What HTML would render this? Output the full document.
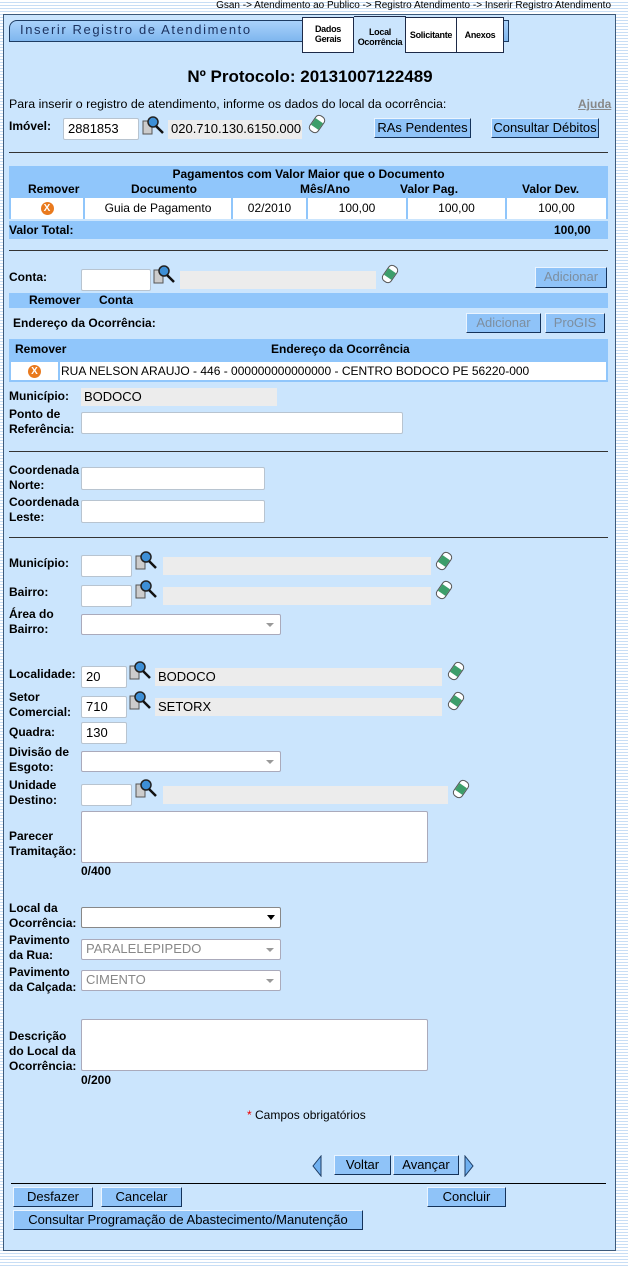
<!DOCTYPE html>
<html><head><meta charset="utf-8"><style>
*{box-sizing:border-box;margin:0;padding:0}
body{width:628px;height:1267px;position:relative;overflow:hidden;font-family:"Liberation Sans",sans-serif;font-size:12px;color:#000;
background:#fff repeating-linear-gradient(#fff 0 2px,#c8def5 2px 3px)}
.a{position:absolute}
#panel{position:absolute;left:3px;top:14px;width:613px;height:1237px;background:#cbe5fd;border:1px solid #3d5a7a}
.l{position:absolute;font-weight:bold;font-size:12px;line-height:15px;white-space:nowrap}
.in{position:absolute;background:#fff;border:1px solid #b8c4d0;border-radius:2px;font-size:13px;padding:3px 0 0 4px;line-height:14px}
.g{position:absolute;background:#ececec;font-size:13px;padding:2px 3px;line-height:14px}
.sel{position:absolute;background:#fff;border:1px solid #aab;border-radius:2px;font-size:13px;color:#888;padding:2px 4px;line-height:14px}
.sel:after{content:"";position:absolute;right:6px;top:8px;border:4px solid transparent;border-top:4px solid #999}
.btn{position:absolute;background:#8fc3f8;border:1px solid;border-color:#eaf4ff #15335a #15335a #eaf4ff;text-align:center;font-size:13px;line-height:17px}
.dis{color:#7d8e9f}
.hr{position:absolute;left:9px;width:599px;height:1px;background:#333}
.bar{position:absolute;background:#90c6fb;font-weight:bold;font-size:12px}
.cell{position:absolute;background:#fff;text-align:center;font-size:12px;line-height:20px}
.x{display:inline-block;width:13px;height:13px;border-radius:50%;background:#e97a1e;color:#fff;font-size:10px;font-weight:bold;line-height:13px;text-align:center;vertical-align:middle}
.ta{position:absolute;background:#fff;border:1px solid #aab;border-radius:2px}
.tab{position:absolute;font-weight:bold;font-size:9px;line-height:10px;text-align:center;letter-spacing:-0.3px}
</style></head><body>
<div class="a" style="right:17px;top:0;font-size:10px;line-height:11px">Gsan -&gt; Atendimento ao Publico -&gt; Registro Atendimento -&gt; Inserir Registro Atendimento</div>
<div id="panel"></div>
<div class="a" style="left:9px;top:20px;width:500px;height:22px;background:linear-gradient(#a9d2fb,#7fb6ee);border:1px solid #1d3c63;border-radius:8px 0 0 0"></div>
<div class="a" style="left:20px;top:22px;font-size:13px;letter-spacing:1.6px;color:#1d3360">Inserir Registro de Atendimento</div>
<div class="tab" style="left:302px;top:17px;width:52px;height:36px;background:#fff;border:1px solid #1d2a48;padding-top:6px">Dados<br>Gerais</div>
<div class="tab" style="left:354px;top:16px;width:52px;height:38px;background:#cbe5fd;padding-top:10px;border-top:1px solid #1d2a48">Local<br>Ocorrência</div>
<div class="tab" style="left:405px;top:17px;width:52px;height:36px;background:#fff;border:1px solid #1d2a48;line-height:34px">Solicitante</div>
<div class="tab" style="left:456px;top:17px;width:48px;height:36px;background:#fff;border:1px solid #1d2a48;line-height:34px">Anexos</div>

<div class="a" style="left:0;width:620px;top:67px;text-align:center;font-weight:bold;font-size:17px">Nº Protocolo: 20131007122489</div>
<div class="a" style="left:9px;top:97px;font-size:12.4px">Para inserir o registro de atendimento, informe os dados do local da ocorrência:</div>
<div class="a" style="left:578px;top:97px;font-size:12px;font-weight:bold;color:#888;text-decoration:underline">Ajuda</div>

<div class="l" style="left:9px;top:119px">Imóvel:</div>
<div class="in" style="left:63px;top:118px;width:76px;height:22px">2881853</div>
<svg class="a" style="left:142px;top:115px" width="24" height="22"><rect x="1" y="6" width="9" height="13" fill="#ccc" stroke="#555"/><circle cx="11" cy="7" r="5" fill="#3d8fd6" stroke="#222" stroke-width="1.5"/><line x1="14" y1="11" x2="21" y2="18" stroke="#111" stroke-width="2.5"/></svg>
<div class="g" style="left:168px;top:120px;width:134px;height:19px">020.710.130.6150.000</div>
<svg class="a" style="left:307px;top:114px" width="20" height="20"><g transform="rotate(35 10 10)"><rect x="5" y="1" width="10" height="18" rx="4" fill="#fff" stroke="#555"/><rect x="5.5" y="6" width="9" height="8" fill="#3d9e6a"/></g></svg>
<div class="btn" style="left:374px;top:118px;width:97px;height:20px">RAs Pendentes</div>
<div class="btn" style="left:491px;top:118px;width:108px;height:20px">Consultar Débitos</div>

<div class="hr" style="top:152px"></div>
<div class="bar" style="left:9px;top:166px;width:599px;height:73px"></div>
<div class="a" style="left:9px;top:167px;width:599px;text-align:center;font-weight:bold">Pagamentos com Valor Maior que o Documento</div>
<div class="l" style="left:28px;top:182px">Remover</div>
<div class="l" style="left:131px;top:182px">Documento</div>
<div class="l" style="left:300px;top:182px">Mês/Ano</div>
<div class="l" style="left:400px;top:182px">Valor Pag.</div>
<div class="l" style="left:522px;top:182px">Valor Dev.</div>
<div class="cell" style="left:11px;top:198px;width:72px;height:21px"><span class="x">X</span></div>
<div class="cell" style="left:85px;top:198px;width:146px;height:21px">Guia de Pagamento</div>
<div class="cell" style="left:233px;top:198px;width:73px;height:21px">02/2010</div>
<div class="cell" style="left:308px;top:198px;width:98px;height:21px">100,00</div>
<div class="cell" style="left:408px;top:198px;width:97px;height:21px">100,00</div>
<div class="cell" style="left:507px;top:198px;width:99px;height:21px">100,00</div>
<div class="a" style="left:8px;top:219px;width:600px;height:2px;background:#cbe5fd"></div>
<div class="l" style="left:9px;top:223px">Valor Total:</div>
<div class="l" style="left:554px;top:223px">100,00</div>

<div class="hr" style="top:250px"></div>
<div class="l" style="left:9px;top:270px">Conta:</div>
<div class="in" style="left:81px;top:269px;width:70px;height:22px"></div>
<svg class="a" style="left:153px;top:264px" width="24" height="22"><rect x="1" y="6" width="9" height="13" fill="#ccc" stroke="#555"/><circle cx="11" cy="7" r="5" fill="#3d8fd6" stroke="#222" stroke-width="1.5"/><line x1="14" y1="11" x2="21" y2="18" stroke="#111" stroke-width="2.5"/></svg>
<div class="g" style="left:180px;top:271px;width:196px;height:18px"></div>
<svg class="a" style="left:380px;top:264px" width="20" height="20"><g transform="rotate(35 10 10)"><rect x="5" y="1" width="10" height="18" rx="4" fill="#fff" stroke="#555"/><rect x="5.5" y="6" width="9" height="8" fill="#3d9e6a"/></g></svg>
<div class="btn dis" style="left:535px;top:267px;width:72px;height:21px">Adicionar</div>
<div class="bar" style="left:9px;top:293px;width:599px;height:15px"></div>
<div class="l" style="left:29px;top:293px">Remover</div>
<div class="l" style="left:99px;top:293px">Conta</div>
<div class="l" style="left:13px;top:316px">Endereço da Ocorrência:</div>
<div class="btn dis" style="left:466px;top:313px;width:75px;height:20px">Adicionar</div>
<div class="btn dis" style="left:545px;top:313px;width:60px;height:20px">ProGIS</div>
<div class="bar" style="left:9px;top:339px;width:599px;height:43px"></div>
<div class="l" style="left:15px;top:342px">Remover</div>
<div class="l" style="left:271px;top:342px">Endereço da Ocorrência</div>
<div class="cell" style="left:11px;top:362px;width:47px;height:18px;line-height:18px"><span class="x">X</span></div>
<div class="cell" style="left:60px;top:362px;width:546px;height:18px;line-height:18px;text-align:left;padding-left:1px">RUA NELSON ARAUJO - 446 - 000000000000000 - CENTRO BODOCO PE 56220-000</div>

<div class="l" style="left:9px;top:389px">Município:</div>
<div class="g" style="left:81px;top:388px;width:196px;height:18px">BODOCO</div>
<div class="l" style="left:9px;top:407px">Ponto de<br>Referência:</div>
<div class="in" style="left:81px;top:412px;width:322px;height:22px"></div>

<div class="hr" style="top:451px"></div>
<div class="l" style="left:9px;top:463px">Coordenada<br>Norte:</div>
<div class="in" style="left:81px;top:467px;width:184px;height:23px"></div>
<div class="l" style="left:9px;top:495px">Coordenada<br>Leste:</div>
<div class="in" style="left:81px;top:500px;width:184px;height:23px"></div>

<div class="hr" style="top:537px"></div>
<div class="l" style="left:9px;top:556px">Município:</div>
<div class="in" style="left:81px;top:555px;width:51px;height:22px"></div>
<svg class="a" style="left:135px;top:550px" width="24" height="22"><rect x="1" y="6" width="9" height="13" fill="#ccc" stroke="#555"/><circle cx="11" cy="7" r="5" fill="#3d8fd6" stroke="#222" stroke-width="1.5"/><line x1="14" y1="11" x2="21" y2="18" stroke="#111" stroke-width="2.5"/></svg>
<div class="g" style="left:163px;top:557px;width:268px;height:18px"></div>
<svg class="a" style="left:434px;top:551px" width="20" height="20"><g transform="rotate(35 10 10)"><rect x="5" y="1" width="10" height="18" rx="4" fill="#fff" stroke="#555"/><rect x="5.5" y="6" width="9" height="8" fill="#3d9e6a"/></g></svg>
<div class="l" style="left:9px;top:585px">Bairro:</div>
<div class="in" style="left:81px;top:585px;width:51px;height:22px"></div>
<svg class="a" style="left:135px;top:579px" width="24" height="22"><rect x="1" y="6" width="9" height="13" fill="#ccc" stroke="#555"/><circle cx="11" cy="7" r="5" fill="#3d8fd6" stroke="#222" stroke-width="1.5"/><line x1="14" y1="11" x2="21" y2="18" stroke="#111" stroke-width="2.5"/></svg>
<div class="g" style="left:163px;top:587px;width:268px;height:18px"></div>
<svg class="a" style="left:434px;top:580px" width="20" height="20"><g transform="rotate(35 10 10)"><rect x="5" y="1" width="10" height="18" rx="4" fill="#fff" stroke="#555"/><rect x="5.5" y="6" width="9" height="8" fill="#3d9e6a"/></g></svg>
<div class="l" style="left:9px;top:607px">Área do<br>Bairro:</div>
<div class="sel" style="left:81px;top:614px;width:200px;height:21px"></div>

<div class="l" style="left:9px;top:667px">Localidade:</div>
<div class="in" style="left:81px;top:666px;width:46px;height:22px">20</div>
<svg class="a" style="left:129px;top:660px" width="24" height="22"><rect x="1" y="6" width="9" height="13" fill="#ccc" stroke="#555"/><circle cx="11" cy="7" r="5" fill="#3d8fd6" stroke="#222" stroke-width="1.5"/><line x1="14" y1="11" x2="21" y2="18" stroke="#111" stroke-width="2.5"/></svg>
<div class="g" style="left:155px;top:668px;width:287px;height:18px">BODOCO</div>
<svg class="a" style="left:446px;top:661px" width="20" height="20"><g transform="rotate(35 10 10)"><rect x="5" y="1" width="10" height="18" rx="4" fill="#fff" stroke="#555"/><rect x="5.5" y="6" width="9" height="8" fill="#3d9e6a"/></g></svg>
<div class="l" style="left:9px;top:690px">Setor<br>Comercial:</div>
<div class="in" style="left:81px;top:696px;width:46px;height:22px">710</div>
<svg class="a" style="left:129px;top:690px" width="24" height="22"><rect x="1" y="6" width="9" height="13" fill="#ccc" stroke="#555"/><circle cx="11" cy="7" r="5" fill="#3d8fd6" stroke="#222" stroke-width="1.5"/><line x1="14" y1="11" x2="21" y2="18" stroke="#111" stroke-width="2.5"/></svg>
<div class="g" style="left:155px;top:698px;width:287px;height:18px">SETORX</div>
<svg class="a" style="left:446px;top:691px" width="20" height="20"><g transform="rotate(35 10 10)"><rect x="5" y="1" width="10" height="18" rx="4" fill="#fff" stroke="#555"/><rect x="5.5" y="6" width="9" height="8" fill="#3d9e6a"/></g></svg>
<div class="l" style="left:9px;top:725px">Quadra:</div>
<div class="in" style="left:81px;top:722px;width:46px;height:22px">130</div>
<div class="l" style="left:9px;top:745px">Divisão de<br>Esgoto:</div>
<div class="sel" style="left:81px;top:751px;width:200px;height:21px"></div>
<div class="l" style="left:9px;top:778px">Unidade<br>Destino:</div>
<div class="in" style="left:81px;top:784px;width:51px;height:22px"></div>
<svg class="a" style="left:135px;top:778px" width="24" height="22"><rect x="1" y="6" width="9" height="13" fill="#ccc" stroke="#555"/><circle cx="11" cy="7" r="5" fill="#3d8fd6" stroke="#222" stroke-width="1.5"/><line x1="14" y1="11" x2="21" y2="18" stroke="#111" stroke-width="2.5"/></svg>
<div class="g" style="left:163px;top:786px;width:285px;height:18px"></div>
<svg class="a" style="left:451px;top:779px" width="20" height="20"><g transform="rotate(35 10 10)"><rect x="5" y="1" width="10" height="18" rx="4" fill="#fff" stroke="#555"/><rect x="5.5" y="6" width="9" height="8" fill="#3d9e6a"/></g></svg>
<div class="l" style="left:9px;top:829px">Parecer<br>Tramitação:</div>
<div class="ta" style="left:81px;top:811px;width:347px;height:52px"></div>
<div class="l" style="left:81px;top:864px">0/400</div>

<div class="l" style="left:9px;top:901px">Local da<br>Ocorrência:</div>
<div class="a" style="left:81px;top:907px;width:200px;height:21px;background:#fff;border:1px solid #888;border-radius:2px"></div>
<div class="a" style="left:267px;top:915px;border:4px solid transparent;border-top:5px solid #000"></div>
<div class="l" style="left:9px;top:933px">Pavimento<br>da Rua:</div>
<div class="sel" style="left:81px;top:939px;width:200px;height:21px">PARALELEPIPEDO</div>
<div class="l" style="left:9px;top:965px">Pavimento<br>da Calçada:</div>
<div class="sel" style="left:81px;top:970px;width:200px;height:21px">CIMENTO</div>
<div class="l" style="left:9px;top:1029px">Descrição<br>do Local da<br>Ocorrência:</div>
<div class="ta" style="left:81px;top:1019px;width:347px;height:52px"></div>
<div class="l" style="left:81px;top:1073px">0/200</div>
<div class="a" style="left:247px;top:1108px;font-size:12px"><span style="color:#e00">*</span> Campos obrigatórios</div>

<svg class="a" style="left:311px;top:1155px" width="12" height="22"><path d="M10 1 L2 11 L10 21 Z" fill="#6fb0f0" stroke="#1d3c63"/></svg>
<div class="btn" style="left:334px;top:1155px;width:57px;height:20px">Voltar</div>
<div class="btn" style="left:393px;top:1155px;width:66px;height:20px">Avançar</div>
<svg class="a" style="left:463px;top:1155px" width="12" height="22"><path d="M2 1 L10 11 L2 21 Z" fill="#6fb0f0" stroke="#1d3c63"/></svg>
<div class="a" style="left:11px;top:1183px;width:595px;height:1px;background:#000"></div>
<div class="btn" style="left:13px;top:1187px;width:80px;height:20px">Desfazer</div>
<div class="btn" style="left:101px;top:1187px;width:81px;height:20px">Cancelar</div>
<div class="btn" style="left:427px;top:1187px;width:79px;height:20px">Concluir</div>
<div class="btn" style="left:13px;top:1210px;width:350px;height:20px">Consultar Programação de Abastecimento/Manutenção</div>
</body></html>
